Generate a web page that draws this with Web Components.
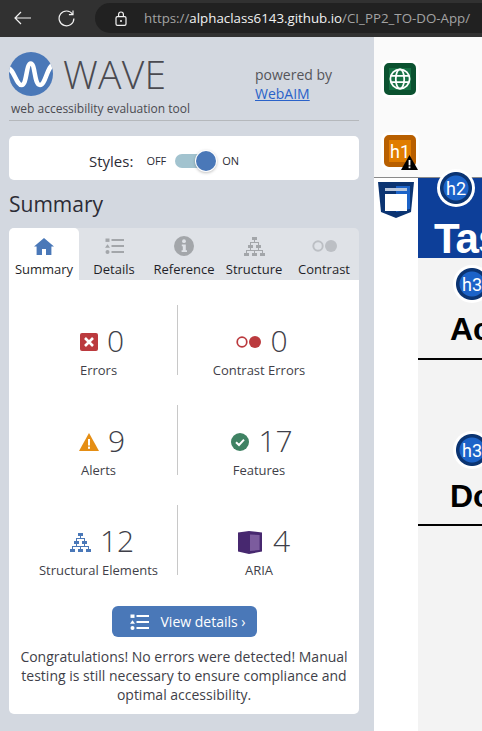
<!DOCTYPE html>
<html lang="en">
<head>
<meta charset="utf-8">
<title>WAVE</title>
<style>
    html, body { margin: 0; height: 731px; overflow: hidden; }
    body { display: flex; flex-direction: column; font-family: "Open Sans", sans-serif; background: #fff; }
    .main { display: flex; flex: 1; min-height: 0; }
</style>
</head>
<body>
<browser-bar url-host="alphaclass6143.github.io" url-path="/CI_PP2_TO-DO-App/"></browser-bar>
<div class="main">
    <wave-sidebar>
        <wave-header></wave-header>
        <styles-toggle></styles-toggle>
        <wave-summary></wave-summary>
    </wave-sidebar>
    <page-preview></page-preview>
</div>

<script>
const ICONS = {
    home: '<svg viewBox="0 0 20 17" width="20" height="17"><path fill="currentColor" d="M10 0 L20 8.6 H17.4 V17 H12 V11 H8 V17 H2.6 V8.6 H0 Z"/></svg>',
    list: '<svg viewBox="0 0 19 16" width="19" height="16"><g fill="currentColor"><rect x="0.5" y="0.5" width="4" height="3.4"/><path d="M2.5 6.2 L5 9.8 H0 Z"/><circle cx="2.5" cy="14" r="2"/><rect x="6.5" y="1" width="12.5" height="2"/><rect x="6.5" y="7" width="12.5" height="2"/><rect x="6.5" y="13" width="12.5" height="2"/></g></svg>',
    info: '<svg viewBox="0 0 20 20" width="20" height="20"><circle cx="10" cy="10" r="10" fill="currentColor"/><circle cx="10" cy="5.2" r="1.9" fill="#dfe2e7"/><path fill="#dfe2e7" d="M7.8 8.4 H11.8 V14.2 H13 V16 H7.6 V14.2 H8.8 V10.2 H7.8 Z"/></svg>',
    tree: '<svg viewBox="0 0 21 19" width="21" height="19"><g fill="currentColor"><rect x="8" y="0" width="5" height="3"/><rect x="4" y="8" width="5" height="3"/><rect x="12" y="8" width="5" height="3"/><rect x="0" y="16" width="5" height="3"/><rect x="8" y="16" width="5" height="3"/><rect x="16" y="16" width="5" height="3"/><rect x="10" y="3" width="1" height="3"/><rect x="6" y="5" width="9" height="1"/><rect x="6" y="5" width="1" height="9"/><rect x="14" y="5" width="1" height="9"/><rect x="2" y="13" width="17" height="1"/><rect x="2" y="13" width="1" height="3"/><rect x="10" y="13" width="1" height="3"/><rect x="18" y="13" width="1" height="3"/></g></svg>',
    contrast: '<svg viewBox="0 0 25 12" width="25" height="12" style="color:#bcbfc4"><circle cx="6" cy="6" r="4.7" fill="none" stroke="currentColor" stroke-width="1.9"/><circle cx="19" cy="6" r="6" fill="currentColor"/></svg>'
};

class BrowserBar extends HTMLElement {
    constructor() {
        super();
        this.attachShadow({mode: 'open'});
        this.shadowRoot.innerHTML = `
            <style>
                :host {
                    display: flex;
                    align-items: center;
                    height: 37px;
                    flex: none;
                    box-sizing: border-box;
                    padding: 0 0 1px 14px;
                    background: #313131;
                    color: #f2f2f2;
                    overflow: hidden;
                }
                svg { display: block; flex: none; }
                .reload { margin-left: 27px; }
                .pill {
                    display: flex;
                    align-items: center;
                    flex: none;
                    width: 420px;
                    height: 30px;
                    margin-left: 20px;
                    padding-left: 20px;
                    box-sizing: border-box;
                    border-radius: 15px;
                    background: #212121;
                    font: 13.3px "Open Sans", sans-serif;
                    white-space: nowrap;
                }
                .lock { margin-right: 17px; }
                .dim { color: #a3a3a3; }
            </style>
            <svg width="17" height="14" viewBox="0 0 17 14" fill="none" stroke="currentColor" stroke-width="1.2"><path d="M7 1 L1 7 L7 13 M1 7 H17"/></svg>
            <svg class="reload" width="17" height="17" viewBox="0 0 17 17" fill="none" stroke="currentColor" stroke-width="1.2"><path d="M14.6 4.2 A7.4 7.4 0 1 0 15.9 8.5"/><path d="M15 0.5 V4.6 H10.9"/></svg>
            <div class="pill">
                <svg class="lock" width="12" height="15" viewBox="0 0 12 15" fill="none" stroke="currentColor" stroke-width="1.2"><rect x="1" y="5.6" width="10" height="8.8" rx="1.4"/><path d="M3.6 5.6 V3.4 A2.4 2.4 0 0 1 8.4 3.4 V5.6"/><circle cx="6" cy="10" r="1" fill="currentColor" stroke="none"/></svg>
                <span class="dim">https://</span><span id="host"></span><span class="dim" id="path"></span>
            </div>
        `;
    }

    connectedCallback() {
        this.shadowRoot.getElementById('host').textContent = this.getAttribute('url-host');
        this.shadowRoot.getElementById('path').textContent = this.getAttribute('url-path');
    }
}

class WaveSidebar extends HTMLElement {
    constructor() {
        super();
        this.attachShadow({mode: 'open'});
        this.shadowRoot.innerHTML = `
            <style>
                :host {
                    display: block;
                    flex: none;
                    width: 374px;
                    box-sizing: border-box;
                    padding: 0 15px 0 9px;
                    background: #d3d8e0;
                    color: #33333d;
                }
            </style>
            <slot></slot>
        `;
    }
}

class WaveHeader extends HTMLElement {
    constructor() {
        super();
        this.attachShadow({mode: 'open'});
        this.shadowRoot.innerHTML = `
            <style>
                :host {
                    display: block;
                    height: 84px;
                    box-sizing: border-box;
                    border-bottom: 1px solid #b5b8bc;
                }
                .row { display: flex; padding-top: 15px; }
                .brand { width: 246px; flex: none; }
                .logo { display: flex; align-items: center; gap: 10px; height: 44px; }
                .word {
                    font: 300 39px/44px "Open Sans", sans-serif;
                    letter-spacing: 0.3px;
                    color: #4a4a50;
                }
                .tag {
                    margin: 4px 0 0 2px;
                    font-size: 12px;
                    line-height: 17px;
                    color: #4a4a50;
                }
                .powered {
                    padding-top: 13px;
                    font-size: 14px;
                    line-height: 19px;
                    color: #55555a;
                }
                a { color: #2a62c9; }
            </style>
            <div class="row">
                <div class="brand">
                    <div class="logo">
                        <svg width="44" height="44" viewBox="0 0 44 44">
                            <defs><clipPath id="c"><circle cx="22" cy="22" r="22"/></clipPath></defs>
                            <circle cx="22" cy="22" r="22" fill="#4a78b8"/>
                            <path clip-path="url(#c)" d="M-2 16 C5 16 7 33 12.7 33 C18 33 17 11.5 21.7 11.5 C26.5 11.5 25 33 31 33 C37 33 38 12 46 12" fill="none" stroke="#fff" stroke-width="4.5"/>
                        </svg>
                        <span class="word">WAVE</span>
                    </div>
                    <div class="tag">web accessibility evaluation tool</div>
                </div>
                <div class="powered">powered by<br><a href="#">WebAIM</a></div>
            </div>
        `;
    }
}

class StylesToggle extends HTMLElement {
    constructor() {
        super();
        this.attachShadow({mode: 'open'});
        this.shadowRoot.innerHTML = `
            <style>
                :host {
                    display: flex;
                    align-items: center;
                    height: 44px;
                    margin-top: 15px;
                    padding: 5px 0 0 80px;
                    box-sizing: border-box;
                    background: #fff;
                    border-radius: 5px;
                    color: #2c2c36;
                }
                .label { font-size: 15px; margin-right: 13px; }
                .small { font-size: 11px; }
                .track {
                    position: relative;
                    width: 31px;
                    height: 14px;
                    margin: 0 16px 0 9px;
                    border-radius: 7px;
                    background: #a2c3cf;
                }
                .knob {
                    position: absolute;
                    left: 21px;
                    top: -3px;
                    width: 20px;
                    height: 20px;
                    border-radius: 50%;
                    background: #4a78b8;
                    box-shadow: 0 0 0 1px #fff, 0 1px 3px 1px rgba(0, 0, 0, 0.25);
                }
            </style>
            <span class="label">Styles:</span>
            <span class="small">OFF</span>
            <span class="track"><span class="knob"></span></span>
            <span class="small">ON</span>
        `;
    }
}

class SummaryTab extends HTMLElement {
    constructor() {
        super();
        this.attachShadow({mode: 'open'});
        this.shadowRoot.innerHTML = `
            <style>
                :host {
                    display: flex;
                    flex-direction: column;
                    align-items: center;
                    height: 52px;
                    flex: none;
                    width: 70px;
                    box-sizing: border-box;
                    padding-top: 8px;
                    color: #1f1f29;
                }
                :host([active]) { background: #fff; border-radius: 5px 5px 0 0; }
                .icon {
                    height: 20px;
                    display: flex;
                    align-items: center;
                    justify-content: center;
                    color: #a3a6aa;
                }
                :host([active]) .icon { color: #4a78b8; }
                .text { margin-top: 5px; font-size: 13px; line-height: 17px; white-space: nowrap; }
            </style>
            <div class="icon"></div>
            <div class="text"><slot></slot></div>
        `;
    }

    connectedCallback() {
        this.shadowRoot.querySelector('.icon').innerHTML = ICONS[this.getAttribute('icon')];
    }
}

class StatCell extends HTMLElement {
    constructor() {
        super();
        this.attachShadow({mode: 'open'});
        this.shadowRoot.innerHTML = `
            <style>
                :host {
                    display: flex;
                    flex-direction: column;
                    align-items: center;
                    height: 70px;
                    box-sizing: border-box;
                    padding-top: 17px;
                    color: #3f3f49;
                }
                :host([divider]) { border-left: 1px solid #c8c8c8; }
                .top { display: flex; align-items: center; justify-content: center; gap: 9px; height: 40px; flex: none; padding-left: 7px; }
                :host([divider]) .top { padding-left: 6px; }
                .count { font-size: 30px; line-height: 38px; height: 40px; font-weight: 300; }
                .name { font-size: 13px; line-height: 17px; white-space: nowrap; flex: none; }
                ::slotted(svg) { display: block; }
            </style>
            <div class="top"><slot></slot><span class="count"></span></div>
            <div class="name"></div>
        `;
    }

    connectedCallback() {
        this.shadowRoot.querySelector('.count').textContent = this.getAttribute('count');
        this.shadowRoot.querySelector('.name').textContent = this.getAttribute('name');
    }
}

class WaveSummary extends HTMLElement {
    constructor() {
        super();
        this.attachShadow({mode: 'open'});
        this.shadowRoot.innerHTML = `
            <style>
                :host { display: block; }
                h2 {
                    margin: 9px 0 9px;
                    font-size: 21px;
                    line-height: 30px;
                    font-weight: 400;
                    color: #2c2c36;
                }
                .tabs {
                    display: flex;
                    height: 52px;
                    background: #dfe2e7;
                    border-radius: 5px 5px 0 0;
                }
                .panel {
                    height: 434px;
                    box-sizing: border-box;
                    padding-top: 25px;
                    background: #fff;
                    border-radius: 0 0 5px 5px;
                }
                .grid {
                    display: grid;
                    grid-template-columns: 157px 163px;
                    row-gap: 30px;
                    padding-left: 11px;
                }
                .btn {
                    display: flex;
                    align-items: center;
                    width: 145px;
                    height: 31px;
                    margin: 31px auto 0;
                    box-sizing: border-box;
                    padding-left: 18px;
                    border-radius: 6px;
                    background: #4a78b8;
                    color: #fff;
                    font-size: 14px;
                }
                .btn svg { margin-right: 12px; }
                p {
                    margin: 10px 0 0;
                    font-size: 14px;
                    line-height: 19px;
                    text-align: center;
                    color: #3f3f49;
                }
            </style>
            <h2>Summary</h2>
            <div class="tabs">
                <summary-tab icon="home" active>Summary</summary-tab>
                <summary-tab icon="list">Details</summary-tab>
                <summary-tab icon="info">Reference</summary-tab>
                <summary-tab icon="tree">Structure</summary-tab>
                <summary-tab icon="contrast">Contrast</summary-tab>
            </div>
            <div class="panel">
                <div class="grid">
                    <stat-cell count="0" name="Errors">
                        <svg width="18" height="18" viewBox="0 0 18 18"><rect width="18" height="18" rx="2" fill="#bb3a3e"/><path d="M5 5 L13 13 M13 5 L5 13" stroke="#fff" stroke-width="2.6"/></svg>
                    </stat-cell>
                    <stat-cell count="0" name="Contrast Errors" divider>
                        <svg width="25" height="12" viewBox="0 0 25 12"><circle cx="6" cy="6" r="4.8" fill="none" stroke="#bb3a3e" stroke-width="1.7"/><circle cx="19" cy="6" r="6" fill="#bb3a3e"/></svg>
                    </stat-cell>
                    <stat-cell count="9" name="Alerts">
                        <svg width="20" height="18" viewBox="0 0 20 18"><path d="M10 0 L20 18 H0 Z" fill="#e58e14"/><rect x="9" y="6" width="2" height="6.5" fill="#fff"/><rect x="9" y="13.6" width="2" height="2.2" fill="#fff"/></svg>
                    </stat-cell>
                    <stat-cell count="17" name="Features" divider>
                        <svg width="18" height="18" viewBox="0 0 18 18"><circle cx="9" cy="9" r="9" fill="#3f8263"/><path d="M5 9.2 L8 12 L13 6.6" fill="none" stroke="#fff" stroke-width="2"/></svg>
                    </stat-cell>
                    <stat-cell count="12" name="Structural Elements">
                        <svg width="21" height="19" viewBox="0 0 21 19" style="color:#4a78b8">${ICONS.tree.replace(/<\/?svg[^>]*>/g, '')}</svg>
                    </stat-cell>
                    <stat-cell count="4" name="ARIA" divider>
                        <svg width="24" height="23" viewBox="0 0 24 23" style="margin:0 2px 0 4px"><path d="M0 1.6 L11 0 L24 1.6 V20.6 L11 23 L0 20.6 Z" fill="#47286f"/><path d="M12 3.4 L21.6 4 V19 L12 20 Z" fill="#7c5c9e"/></svg>
                    </stat-cell>
                </div>
                <div class="btn">
                    <svg width="19" height="16" viewBox="0 0 19 16" style="color:#fff">${ICONS.list.replace(/<\/?svg[^>]*>/g, '')}</svg>
                    View details ›
                </div>
                <p>Congratulations! No errors were detected! Manual testing is still necessary to ensure compliance and optimal accessibility.</p>
            </div>
        `;
    }
}

class WaveBadge extends HTMLElement {
    constructor() {
        super();
        this.attachShadow({mode: 'open'});
        this.shadowRoot.innerHTML = `
            <style>
                :host {
                    position: absolute;
                    display: flex;
                    align-items: center;
                    justify-content: center;
                    box-sizing: border-box;
                    font: 18px "Roboto", sans-serif;
                    color: #fff;
                }
                :host([kind="round"]) {
                    width: 38px;
                    height: 38px;
                    border-radius: 50%;
                    background: radial-gradient(circle, #1c63c8 0 12px, #0b3472 13px 15.5px, #fff 16.5px);
                }
                :host([kind="square"]) {
                    width: 32px;
                    height: 32px;
                    border-radius: 5px;
                    border: 5px solid;
                    box-shadow: 0 0 0 3px #fff;
                }
            </style>
            <slot></slot>
        `;
    }
}

class PagePreview extends HTMLElement {
    constructor() {
        super();
        this.attachShadow({mode: 'open'});
        this.shadowRoot.innerHTML = `
            <style>
                :host {
                    display: block;
                    position: relative;
                    flex: 1;
                    overflow: hidden;
                    background: #fff;
                    font-family: "Liberation Sans", sans-serif;
                    color: #000;
                }
                .top { height: 140px; background: #fafafa; border-bottom: 1px solid #8a8a8a; }
                .body { display: flex; height: 553px; }
                .gutter { width: 44px; flex: none; background: #fff; }
                .content { flex: 1; background: #f3f3f3; min-width: 0; }
                .banner { height: 80px; background: #0d3f99; box-sizing: border-box; padding: 41px 0 0 16px; color: #fff; font-size: 42px; line-height: 40px; font-weight: 700; overflow: hidden; white-space: nowrap; letter-spacing: -1px; }
                .sec { box-sizing: border-box; border-bottom: 2px solid #000; padding-left: 32px; font-size: 32px; line-height: 36px; font-weight: 700; white-space: nowrap; }
                .a { height: 102px; padding-top: 53px; }
                .d { height: 166px; padding-top: 118px; }
                svg { position: absolute; display: block; }
            </style>
            <div class="top"></div>
            <div class="body">
                <div class="gutter"></div>
                <div class="content">
                    <div class="banner">Tasks</div>
                    <div class="sec a">Active</div>
                    <div class="sec d">Done</div>
                </div>
            </div>
            <wave-badge kind="square" style="left:10px;top:26px;background:#177044;border-color:#0b5230">
                <svg style="position:static" width="24" height="24" viewBox="0 0 24 24" fill="none" stroke="#fff" stroke-width="1.9"><circle cx="12" cy="12" r="10.5"/><ellipse cx="12" cy="12" rx="4.6" ry="10.5"/><path d="M2 8.5 H22 M2 15.5 H22"/></svg>
            </wave-badge>
            <wave-badge kind="square" style="left:10px;top:98px;background:#e07c00;border-color:#b85f00">h1</wave-badge>
            <svg style="left:27px;top:118px" width="17" height="15" viewBox="0 0 17 15"><path d="M8.5 0 L17 15 H0 Z" fill="#000"/><rect x="7.6" y="5" width="1.8" height="5.4" fill="#fff"/><rect x="7.6" y="11.4" width="1.8" height="1.8" fill="#fff"/></svg>
            <svg style="left:4px;top:145px" width="36" height="36" viewBox="0 0 36 36">
                <path d="M0 0 H36 L33 30 L18 36 L3 30 Z" fill="#0b3472"/>
                <path d="M18 4 H32 V27 L18 30 Z" fill="#1c63c8"/>
                <rect x="7" y="6" width="22" height="3" fill="#b9c7dc"/>
                <rect x="7" y="12" width="22" height="17" fill="#fff"/>
            </svg>
            <wave-badge kind="round" style="left:63px;top:132px">h2</wave-badge>
            <wave-badge kind="round" style="left:79px;top:228px">h3</wave-badge>
            <wave-badge kind="round" style="left:79px;top:394px">h3</wave-badge>
        `;
    }
}

customElements.define('browser-bar', BrowserBar);
customElements.define('wave-sidebar', WaveSidebar);
customElements.define('wave-header', WaveHeader);
customElements.define('styles-toggle', StylesToggle);
customElements.define('summary-tab', SummaryTab);
customElements.define('stat-cell', StatCell);
customElements.define('wave-summary', WaveSummary);
customElements.define('wave-badge', WaveBadge);
customElements.define('page-preview', PagePreview);
</script>
</body>
</html>
